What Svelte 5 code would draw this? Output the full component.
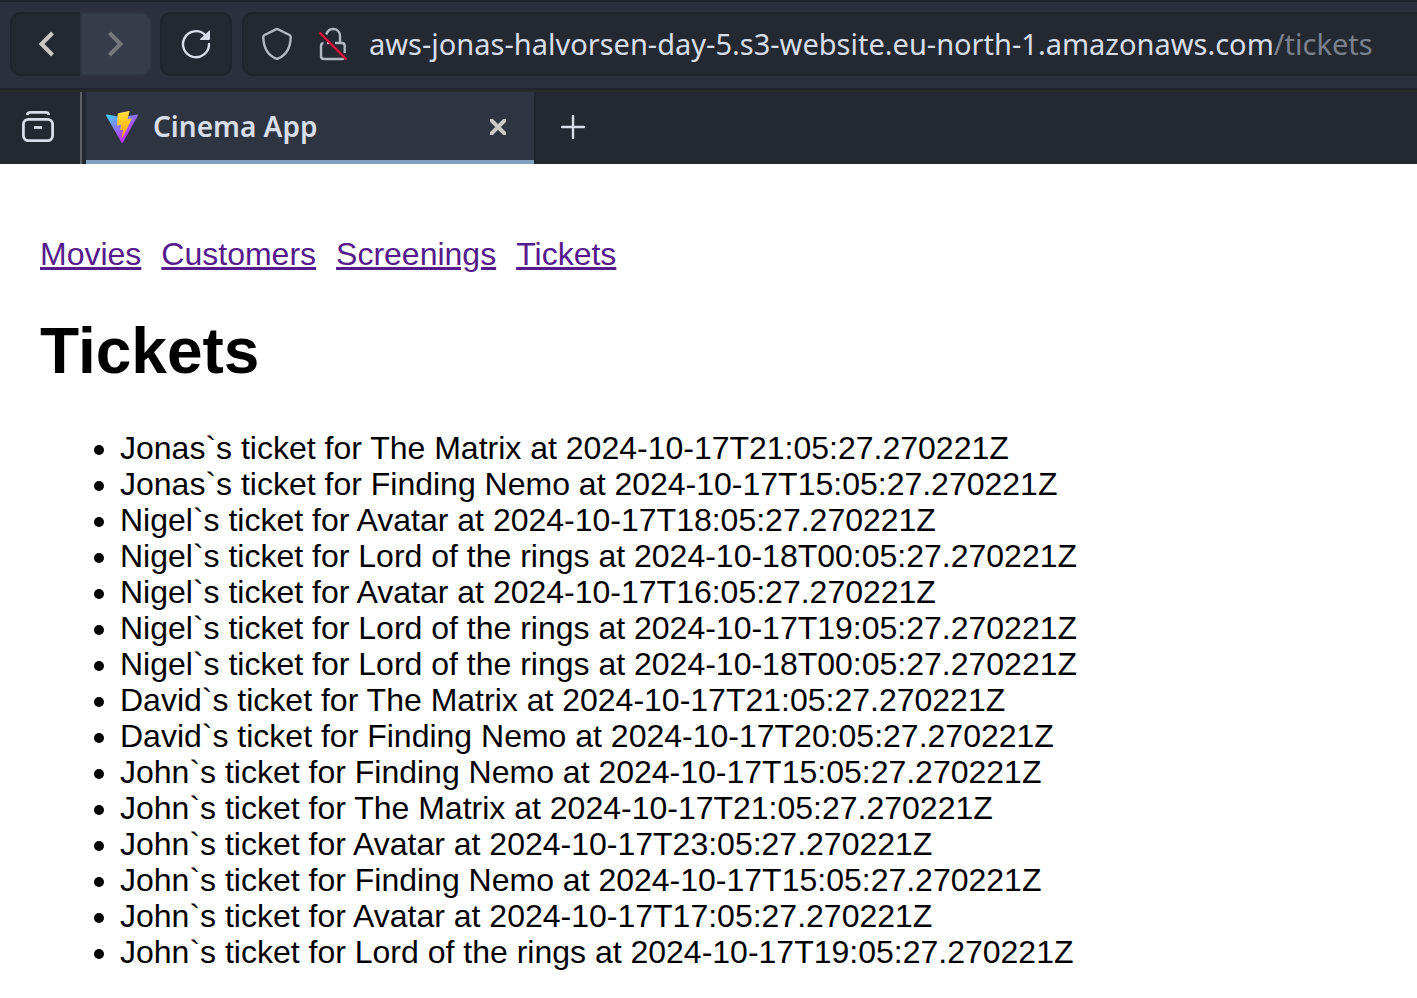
<script>
  const links = ['Movies', 'Customers', 'Screenings', 'Tickets'];

  const tickets = [
    { name: 'Jonas', movie: 'The Matrix', time: '2024-10-17T21:05:27.270221Z' },
    { name: 'Jonas', movie: 'Finding Nemo', time: '2024-10-17T15:05:27.270221Z' },
    { name: 'Nigel', movie: 'Avatar', time: '2024-10-17T18:05:27.270221Z' },
    { name: 'Nigel', movie: 'Lord of the rings', time: '2024-10-18T00:05:27.270221Z' },
    { name: 'Nigel', movie: 'Avatar', time: '2024-10-17T16:05:27.270221Z' },
    { name: 'Nigel', movie: 'Lord of the rings', time: '2024-10-17T19:05:27.270221Z' },
    { name: 'Nigel', movie: 'Lord of the rings', time: '2024-10-18T00:05:27.270221Z' },
    { name: 'David', movie: 'The Matrix', time: '2024-10-17T21:05:27.270221Z' },
    { name: 'David', movie: 'Finding Nemo', time: '2024-10-17T20:05:27.270221Z' },
    { name: 'John', movie: 'Finding Nemo', time: '2024-10-17T15:05:27.270221Z' },
    { name: 'John', movie: 'The Matrix', time: '2024-10-17T21:05:27.270221Z' },
    { name: 'John', movie: 'Avatar', time: '2024-10-17T23:05:27.270221Z' },
    { name: 'John', movie: 'Finding Nemo', time: '2024-10-17T15:05:27.270221Z' },
    { name: 'John', movie: 'Avatar', time: '2024-10-17T17:05:27.270221Z' },
    { name: 'John', movie: 'Lord of the rings', time: '2024-10-17T19:05:27.270221Z' }
  ];

  let path = $state('/tickets');
</script>

<header class="browser">
  <div class="toolbar">
    <div class="history">
      <button class="back" aria-label="Back">
        <svg width="16" height="26" viewBox="0 0 16 26"><path d="M14.500 2 3.500 13l11 11" fill="none" stroke="#cbc9c5" stroke-width="4" /></svg>
      </button>
      <button class="forward" aria-label="Forward" disabled>
        <svg width="16" height="26" viewBox="0 0 16 26"><path d="m1.500 2 11 11-11 11" fill="none" stroke="#75777e" stroke-width="4" /></svg>
      </button>
    </div>
    <button class="reload" aria-label="Reload">
      <svg width="30" height="30" viewBox="0 0 30 30">
        <path d="M28 15A13 13 0 1 1 24 5.800" fill="none" stroke="#d8dee9" stroke-width="2.400" stroke-linecap="round" />
        <path d="M29 1v9a1 1 0 0 1-1 1h-8.500q-1 0-.5-1z" fill="#d8dee9" />
      </svg>
    </button>
    <div class="address">
      <button class="glyph" aria-label="Tracking protection">
        <svg width="30" height="34" viewBox="0 0 30 34">
          <path d="M14 2.300q1-.5 2 0L27.500 8q1.200.7 1.200 2C28.500 20 25 28 15.800 31.600q-.8.3-1.600 0C5 28 1.500 20 1.300 10q0-1.300 1.200-2z" fill="none" stroke="#b4b8c3" stroke-width="2.400" stroke-linejoin="round" />
        </svg>
      </button>
      <button class="glyph" aria-label="Connection is not secure">
        <svg width="30" height="34" viewBox="0 0 30 34">
          <path d="M8.200 7.500C9.500 3.800 12 2 15 2c4.300 0 7 3 7 7v7M5.500 16q-2.500.3-2.500 3v10q0 3 3 3h18q1.200 0 2-.5M17 16h7q2.700 0 2.700 3v7" fill="none" stroke="#b4b8c3" stroke-width="2.400" />
          <path d="M9 16h2.500" stroke="#b4b8c3" stroke-width="2.400" />
          <path d="m1.500 5.500 27 27" stroke="#e0103f" stroke-width="2.400" />
        </svg>
      </button>
      <label class="host" for="path">aws-jonas-halvorsen-day-5.s3-website.eu-north-1.amazonaws.com</label>
      <input id="path" class="path" type="text" bind:value={path} spellcheck="false" />
    </div>
  </div>
  <div class="tabs">
    <button class="overview" aria-label="Recent tabs">
      <svg width="32" height="32" viewBox="0 0 32 32" fill="none" stroke="#d8dee9" stroke-width="2.800">
        <path d="M5.200 4Q5.500 1.400 8.500 1.400h15Q26.500 1.400 26.800 4" />
        <rect x="1.400" y="8.400" width="29.200" height="21.200" rx="5" />
        <path d="M12 16.500h8" />
      </svg>
    </button>
    <div class="tab">
      <svg width="32" height="32" viewBox="0 0 256 257">
        <defs>
          <linearGradient id="shield" x1="-.828%" x2="57.636%" y1="7.652%" y2="78.411%">
            <stop offset="0%" stop-color="#41D1FF" /><stop offset="100%" stop-color="#BD34FE" />
          </linearGradient>
          <linearGradient id="bolt" x1="43.376%" x2="50.316%" y1="2.242%" y2="89.03%">
            <stop offset="0%" stop-color="#FFEA83" /><stop offset="8.333%" stop-color="#FFDD35" /><stop offset="100%" stop-color="#FFA800" />
          </linearGradient>
        </defs>
        <path fill="url(#shield)" d="M255.153 37.938L134.897 252.976c-2.483 4.44-8.862 4.466-11.382.048L.875 37.958c-2.746-4.814 1.371-10.646 6.827-9.67l120.385 21.517a6.537 6.537 0 0 0 2.322-.004l117.867-21.483c5.438-.991 9.574 4.796 6.877 9.62Z" />
        <path fill="url(#bolt)" d="M185.432.063L96.44 17.501a3.268 3.268 0 0 0-2.634 3.014l-5.474 92.456a3.268 3.268 0 0 0 3.997 3.378l24.777-5.718c2.318-.535 4.413 1.507 3.936 3.838l-7.361 36.047c-.495 2.426 1.782 4.5 4.151 3.78l15.304-4.649c2.372-.72 4.652 1.36 4.15 3.788l-11.698 56.621c-.732 3.542 3.979 5.473 5.943 2.437l1.313-2.028l72.516-144.72c1.215-2.423-.88-5.186-3.54-4.672l-25.505 4.922c-2.396.462-4.435-1.77-3.759-4.114l16.646-57.705c.677-2.35-1.37-4.583-3.769-4.113Z" />
      </svg>
      <span class="title">Cinema App</span>
      <button class="close" aria-label="Close tab">
        <svg width="16" height="16" viewBox="0 0 16 16"><path d="m1.500 1.500 13 13m0-13-13 13" stroke="#cbc9c5" stroke-width="4" stroke-linecap="square" /></svg>
      </button>
    </div>
    <button class="new-tab" aria-label="New tab">
      <svg width="24" height="24" viewBox="0 0 24 24"><path d="M12 1v22M1 12h22" stroke="#d8dee9" stroke-width="2.400" stroke-linecap="round" /></svg>
    </button>
  </div>
</header>

<main>
  <nav>
    {#each links as link}
      <a href={'#' + link.toLowerCase()}>{link}</a>
    {/each}
  </nav>
  <h1>Tickets</h1>
  <ul>
    {#each tickets as ticket}
      <li>{ticket.name}`s ticket for {ticket.movie} at {ticket.time}</li>
    {/each}
  </ul>
</main>

<style>
  :global(body) {
    margin: 0;
    background: #fff;
  }

  button {
    display: flex;
    align-items: center;
    justify-content: center;
    padding: 0;
    border: 0;
    background: none;
  }

  svg {
    display: block;
    flex: none;
  }

  .browser {
    font-family: "Noto Sans", "Open Sans", sans-serif;
    background: #242830;
    color: #d8dee9;
  }

  .toolbar {
    display: flex;
    gap: 8px;
    padding: 10px 0 12px 10px;
    border-top: 2px solid #20242c;
    border-bottom: 2px solid #20242c;
    background: #2b303c;
  }

  .back,
  .forward,
  .reload,
  .address {
    box-sizing: border-box;
    height: 64px;
    border: 2px solid #20242c;
    border-radius: 10px;
    background: #242830;
  }

  .history {
    display: flex;
    width: 142px;
  }

  .back {
    flex: 1;
    border-right: 0;
    border-radius: 10px 0 0 10px;
  }

  .forward {
    width: 72px;
    border-color: #2f3441;
    border-radius: 0 10px 10px 0;
    background: #373c4a;
  }

  .reload {
    width: 72px;
  }

  .address {
    display: flex;
    flex: 1;
    align-items: center;
    min-width: 0;
    margin-left: 2px;
    padding-left: 18px;
    border-right: 0;
    border-radius: 10px 0 0 10px;
    font-size: 29px;
    font-weight: 400;
    line-height: 40px;
    white-space: nowrap;
  }

  .glyph {
    margin-right: 26px;
  }

  .glyph + .host {
    margin-left: -5px;
  }

  .path {
    flex: 1;
    min-width: 0;
    padding: 0;
    border: 0;
    outline: 0;
    background: none;
    color: #7b828e;
    font: inherit;
  }

  .tabs {
    display: flex;
    height: 72px;
    border-top: 2px solid #292a2c;
  }

  .overview {
    width: 82px;
    padding: 0 4px 2px 0;
    border-right: 2px solid #5d6067;
  }

  .tab {
    box-sizing: border-box;
    display: flex;
    align-items: center;
    width: 448px;
    margin-left: 4px;
    padding: 2px 28px 0 20px;
    border-bottom: 4px solid #81a1c1;
    background: #2e3440;
  }

  .title {
    flex: 1;
    margin-left: 15px;
    padding-bottom: 2px;
    font-size: 28px;
    font-weight: 600;
    line-height: 40px;
  }

  .new-tab {
    width: 78px;
    padding: 0 2px 2px 0;
    border-left: 2px solid #20242c;
  }

  main {
    padding: 72px 40px 0;
    color: #000;
    font: 32px/36px "Liberation Sans", Arial, sans-serif;
  }

  nav {
    display: flex;
    gap: 20px;
  }

  a {
    color: #551a8b;
  }

  h1 {
    margin: 43px 0;
    font-size: 64px;
    line-height: 72px;
  }

  ul {
    margin: 0;
    padding-left: 80px;
  }
</style>
